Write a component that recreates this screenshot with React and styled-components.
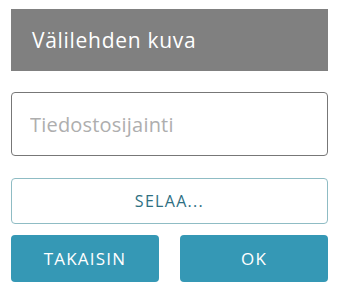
import React from "react";
import styled, { createGlobalStyle } from "styled-components";

const Global = createGlobalStyle`
  html, body { margin: 0; padding: 0; background: #fff; }
  body { font-family: "Open Sans", "DejaVu Sans", sans-serif; }
  * { box-sizing: border-box; }
`;

const Dialog = styled.div`
  width: 341px;
  padding: 9px 13px 9px 11px;
  display: flex;
  flex-direction: column;
`;

const Header = styled.div`
  height: 62px;
  background: #808080;
  color: #fff;
  display: flex;
  align-items: center;
  padding-left: 21px;
  font-size: 21px;
  letter-spacing: 0.7px;
  font-weight: 400;
`;

const Input = styled.input`
  margin-top: 21px;
  height: 64px;
  width: 100%;
  border: 1px solid #777;
  border-radius: 4px;
  padding: 0 18px;
  font-family: inherit;
  font-size: 20px;
  letter-spacing: 0.2px;
  color: #333;
  outline: none;
  &::placeholder { color: #aeaeae; }
`;

const Browse = styled.button`
  margin-top: 22px;
  height: 46px;
  width: 100%;
  background: #fff;
  border: 1px solid #8fbcc4;
  border-radius: 4px;
  color: #2e6f82;
  font-family: inherit;
  font-size: 16px;
  letter-spacing: 1.3px;
`;

const Row = styled.div`
  margin-top: 11px;
  display: grid;
  grid-template-columns: 1fr 1fr;
  gap: 21px;
`;

const Primary = styled.button`
  height: 47px;
  background: #3598b5;
  border: none;
  border-radius: 4px;
  color: #fff;
  font-family: inherit;
  font-size: 17px;
  letter-spacing: 1.2px;
`;

export default function App() {
  return (
    <>
      <Global />
      <Dialog>
        <Header>Välilehden kuva</Header>
        <Input placeholder="Tiedostosijainti" />
        <Browse>SELAA...</Browse>
        <Row>
          <Primary>TAKAISIN</Primary>
          <Primary>OK</Primary>
        </Row>
      </Dialog>
    </>
  );
}
